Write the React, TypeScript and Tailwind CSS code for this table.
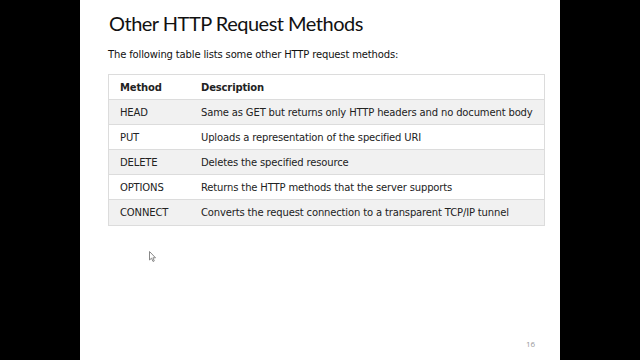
import React from "react";

const rows = [
  ["HEAD", "Same as GET but returns only HTTP headers and no document body"],
  ["PUT", "Uploads a representation of the specified URI"],
  ["DELETE", "Deletes the specified resource"],
  ["OPTIONS", "Returns the HTTP methods that the server supports"],
  ["CONNECT", "Converts the request connection to a transparent TCP/IP tunnel"],
];

export default function App() {
  return (
    <div className="w-[640px] h-[360px] bg-black flex justify-center overflow-hidden">
      <div className="relative w-[480px] h-[360px] bg-white pl-[28px] pt-[9px]">
        <h1
          className="text-[20px] leading-[28px] tracking-[-0.5px] text-[#111] pl-[1px]"
          style={{ fontFamily: 'Lato, sans-serif' }}
        >
          Other HTTP Request Methods
        </h1>
        <div style={{ fontFamily: '"DejaVu Sans", Verdana, sans-serif' }} className="tracking-[-0.15px]">
          <p className="mt-[11px] text-[10px] leading-[14px] text-[#111]">
            The following table lists some other HTTP request methods:
          </p>
          <div className="mt-[12px] w-[437px] border border-[#dcdcdc] text-[10px] text-[#222]">
            <div className="flex h-[25px] items-center font-bold border-b border-[#dcdcdc]">
              <div className="w-[92px] pl-[11px]">Method</div>
              <div>Description</div>
            </div>
            {rows.map(([m, d], i) => (
              <div
                key={m}
                className={`flex h-[25px] items-center ${i < rows.length - 1 ? "border-b border-[#dcdcdc]" : ""} ${i % 2 === 0 ? "bg-[#f1f1f1]" : "bg-white"}`}
              >
                <div className="w-[92px] pl-[11px]">{m}</div>
                <div>{d}</div>
              </div>
            ))}
          </div>
        </div>
        <svg className="absolute left-[69px] top-[251px]" width="8" height="12" viewBox="0 0 8 12">
          <path d="M0.5 0.5 L0.5 9 L2.5 7.2 L4 10.5 L5.3 9.9 L3.9 6.8 L6.5 6.8 Z" fill="#fff" stroke="#888" strokeWidth="1" />
        </svg>
        <div
          className="absolute left-[446px] top-[338px] text-[8px] text-[#999]"
          style={{ fontFamily: '"Open Sans", sans-serif' }}
        >
          16
        </div>
      </div>
    </div>
  );
}
